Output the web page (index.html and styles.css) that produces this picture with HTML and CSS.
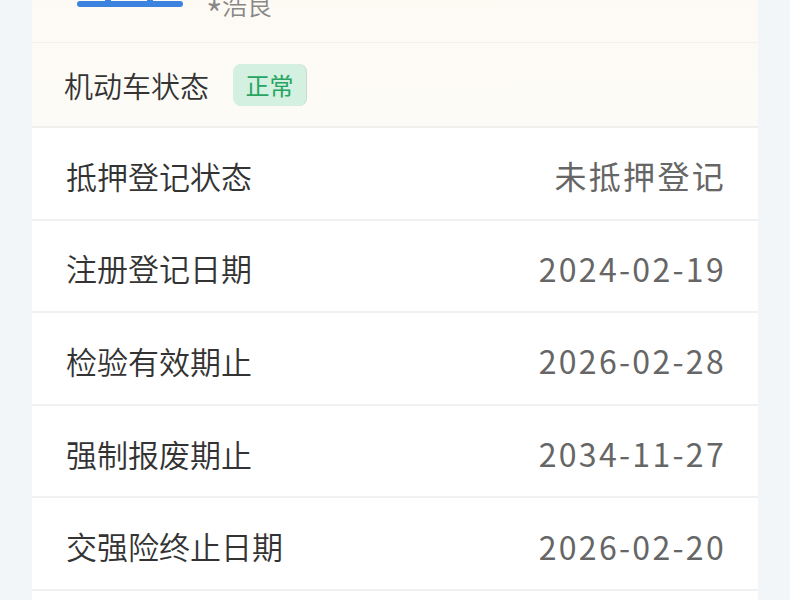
FILE: index.html
```html
<!DOCTYPE html>
<html lang="zh-CN">
<head>
    <meta charset="UTF-8">
    <meta name="viewport" content="width=device-width, initial-scale=1.0">
    <title>机动车信息</title>
    <link rel="stylesheet" href="styles.css">
</head>
<body>
    <div class="page">
        <div class="card">
            <div class="card-top">
                <div class="owner">
                    <svg class="plate" width="108" height="10" viewBox="0 0 108 10">
                        <circle cx="32" cy="0" r="3" fill="#3c83e0"/>
                        <circle cx="74" cy="0" r="3" fill="#3c83e0"/>
                        <rect x="1" y="1" width="106" height="6" rx="3" fill="#3c83e0"/>
                    </svg>
                    <div class="owner-name"><span class="mask">*</span>浩良</div>
                </div>
                <div class="status-row">
                    <span class="status-label">机动车状态</span>
                    <span class="badge">正常</span>
                </div>
            </div>
            <div class="info-list">
                <div class="info-row">
                    <span class="info-label">抵押登记状态</span>
                    <span class="info-value">未抵押登记</span>
                </div>
                <div class="info-row">
                    <span class="info-label">注册登记日期</span>
                    <span class="info-value">2024-02-19</span>
                </div>
                <div class="info-row">
                    <span class="info-label">检验有效期止</span>
                    <span class="info-value">2026-02-28</span>
                </div>
                <div class="info-row">
                    <span class="info-label">强制报废期止</span>
                    <span class="info-value">2034-11-27</span>
                </div>
                <div class="info-row">
                    <span class="info-label">交强险终止日期</span>
                    <span class="info-value">2026-02-20</span>
                </div>
            </div>
        </div>
    </div>
</body>
</html>
```

FILE: styles.css
```css
html, body {
    margin: 0;
    height: 100%;
    overflow: hidden;
}
body {
    background-color: #f3f6f8;
    font-family: "Noto Sans CJK SC", "Noto Sans", sans-serif;
    font-weight: 350;
    color: #333;
}
.page {
    padding: 0 32px;
}
.card {
    background-color: #fff;
    padding-bottom: 40px;
}
.card-top {
    background: linear-gradient(180deg, #fdfaf4 0%, #fdfbf7 100%);
    border-bottom: 2px solid #f1f0ee;
}
.owner {
    height: 42px;
    border-bottom: 1px solid #f4f1ec;
    display: flex;
    align-items: flex-start;
    padding-left: 44px;
    overflow: hidden;
}
.plate {
    display: block;
}
.owner-name {
    margin-left: 22px;
    margin-top: -13px;
    font-size: 25px;
    line-height: 34px;
    color: #888;
}
.owner-name .mask {
    display: inline-block;
    width: 16px;
    font-size: 36px;
    line-height: 1;
    vertical-align: -13px;
}
.status-row {
    height: 83px;
    display: flex;
    align-items: center;
    padding-left: 32px;
}
.status-label {
    font-size: 29px;
    color: #333;
}
.badge {
    margin-left: 24px;
    width: 73px;
    height: 42px;
    border-radius: 8px;
    background-color: #d3f0e0;
    color: #27a462;
    font-size: 24px;
    font-weight: 400;
    display: flex;
    align-items: center;
    justify-content: center;
    box-shadow: 1px 0 0 #c7dcd0;
}
.info-row {
    height: 92.6px;
    border-bottom: 2px solid #f0f1f3;
    display: flex;
    align-items: center;
    justify-content: space-between;
    padding: 4px 34px 0 34px;
    box-sizing: border-box;
}
.info-label {
    font-size: 31px;
    color: #333;
}
.info-value {
    font-size: 32px;
    font-weight: 400;
    letter-spacing: 2.3px;
    margin-right: -2px;
    color: #666;
}
```
